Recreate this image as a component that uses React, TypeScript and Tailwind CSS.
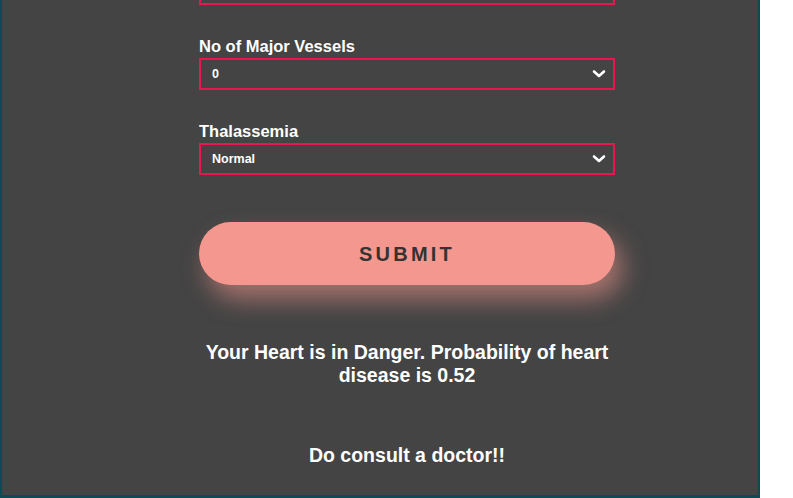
import React from "react";

function Chevron() {
  return (
    <svg width="14" height="9" viewBox="0 0 14 9" className="pointer-events-none absolute right-[7px] top-1/2 -translate-y-1/2">
      <polyline points="2,2 7,6.5 12,2" fill="none" stroke="#ffffff" strokeWidth="2.6" strokeLinecap="round" strokeLinejoin="round" />
    </svg>
  );
}

function SelectBox({ value }: { value: string }) {
  return (
    <div className="relative h-[32px] w-full border-2 border-[#e8174f] bg-[#444444]">
      <div className="flex h-full items-center pl-[11px] text-[12.5px] font-bold text-white">{value}</div>
      <Chevron />
    </div>
  );
}

export default function App() {
  const fields = [
    { label: "No of Major Vessels", value: "0" },
    { label: "Thalassemia", value: "Normal" },
  ];

  return (
    <div className="flex h-[498px] w-[793px] overflow-hidden bg-white" style={{ fontFamily: '"Liberation Sans", Arial, sans-serif' }}>
      <div className="flex h-full w-[760px] flex-col border-x-2 border-b-[3px] border-[#0d4a55] bg-[#444444] pl-[197px]">
        <div className="w-[416px]">
          <div className="-mt-[27px] h-[32px] w-full border-2 border-[#e8174f]" />

          {fields.map((f) => (
            <div key={f.label} className="mt-[32px]">
              <label className="block text-[16.5px] font-bold leading-[18px] text-white">{f.label}</label>
              <div className="mt-[3px]">
                <SelectBox value={f.value} />
              </div>
            </div>
          ))}

          <button className="mt-[47px] flex h-[63px] w-full items-center justify-center rounded-full bg-[#f4978e] text-[20px] font-bold tracking-[0.16em] text-[#333333] shadow-[8px_14px_24px_rgba(244,151,142,0.55)]">
            SUBMIT
          </button>

          <div className="mt-[56px] text-center text-[19.5px] font-bold leading-[23px] text-white">
            Your Heart is in Danger. Probability of heart
            <br />
            disease is 0.52
          </div>

          <div className="mt-[57px] text-center text-[19.5px] font-bold leading-[23px] text-white">
            Do consult a doctor!!
          </div>
        </div>
      </div>
    </div>
  );
}
